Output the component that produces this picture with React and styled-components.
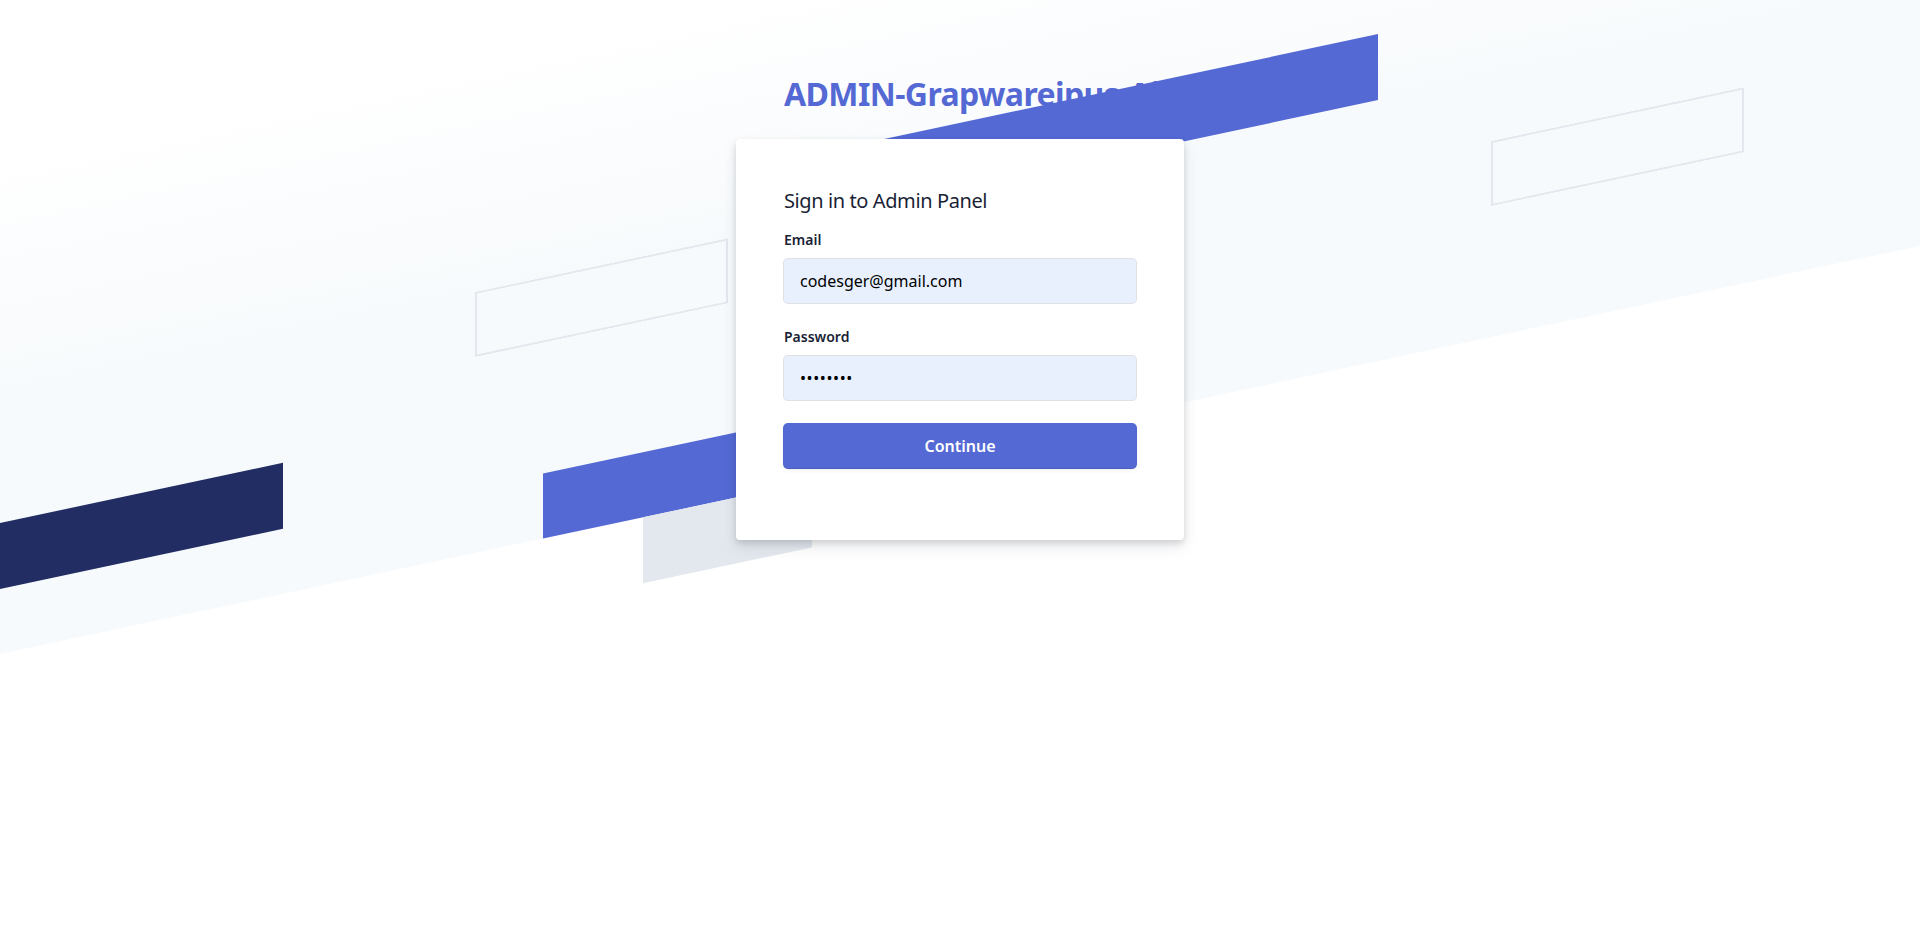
import styled, { createGlobalStyle } from 'styled-components'

const GlobalStyle = createGlobalStyle`
    * {
        box-sizing: border-box;
    }

    html, body {
        margin: 0;
        padding: 0;
        background: #ffffff;
    }

    body {
        font-family: "Noto Sans", "Open Sans", sans-serif;
        color: #1a1f36;
    }
`

const Page = styled.div`
    position: relative;
    min-height: 100vh;
    overflow: hidden;
    display: flex;
    flex-direction: column;
    align-items: center;
    padding-top: 74px;
`

// the backdrop is drawn in a sheared frame (-12deg), rows of 65.4px
const SkewGrid = styled.div`
    position: absolute;
    top: 0;
    left: 0;
    width: 100%;
    z-index: ${props => props.$layer};
    transform: skewY(-12deg);
    transform-origin: 0 0;
    display: grid;
    grid-template-columns: 100%;
    grid-template-rows: 327.3px repeat(6, 65.4px);
    pointer-events: none;
`

const Wash = styled.div`
    grid-row: 1 / 7;
    background-image: linear-gradient(#ffffff 0%, #ffffff 24%, #f7fafc 60%);
`

const Stripe = styled.div`
    grid-row: ${props => props.$row};
    justify-self: start;
    margin-left: ${props => props.$x}px;
    width: ${props => props.$w}px;
    background: ${props => props.$fill || 'transparent'};
    box-shadow: ${props => props.$outline ? 'inset 0 0 0 2px #e3e8ee' : 'none'};
`

const Heading = styled.div`
    position: relative;
    z-index: 1;
    width: 448px;
    padding: 0 48px;
    margin-bottom: 25px;

    & h1 {
        margin: 0;
        font-size: 32px;
        line-height: 40px;
        font-weight: 700;
        color: #5469d4;
        white-space: nowrap;
        letter-spacing: -0.6px;
    }
`

const Card = styled.div`
    position: relative;
    z-index: 3;
    width: 448px;
    padding: 48px;
    background: #ffffff;
    border-radius: 4px;
    box-shadow: rgba(60, 66, 87, 0.12) 0px 7px 14px 0px, rgba(0, 0, 0, 0.12) 0px 3px 6px 0px;
`

const CardTitle = styled.div`
    font-size: 20px;
    line-height: 28px;
    letter-spacing: -0.4px;
    color: #1a1f36;
    margin-bottom: 15px;
`

const Field = styled.div`
    display: flex;
    flex-direction: column;
    margin-bottom: 24px;

    & label {
        font-size: 14px;
        line-height: 20px;
        font-weight: 600;
        color: #1a1f36;
        margin-bottom: 9px;
    }
`

const Input = styled.input`
    height: 44px;
    width: 100%;
    padding: 0 16px;
    border: none;
    border-radius: 4px;
    outline: none;
    font-family: inherit;
    font-size: 16px;
    color: #000000;
    letter-spacing: ${props => props.type === 'password' ? '0.6px' : 'normal'};
    background-color: rgb(232, 240, 254);
    box-shadow: rgba(60, 66, 87, 0.16) 0px 0px 0px 1px;
`

const SubmitButton = styled.button`
    height: 44px;
    width: 100%;
    border: none;
    border-radius: 4px;
    font-family: inherit;
    font-size: 16px;
    font-weight: 600;
    color: #ffffff;
    background-color: rgb(84, 105, 212);
    box-shadow: rgba(0, 0, 0, 0.12) 0px 1px 1px 0px, rgb(84, 105, 212) 0px 0px 0px 1px, rgba(60, 66, 87, 0.08) 0px 2px 5px 0px;
    cursor: pointer;
`

const stripes = [
    { row: 2, x: 760, w: 618, fill: '#5469d4' },
    { row: 3, x: 475, w: 253, outline: true },
    { row: 4, x: 1491, w: 253, outline: true },
    { row: 5, x: -40, w: 323, fill: '#212d63' },
    { row: 6, x: 543, w: 400, fill: '#5469d4' },
    { row: 7, x: 643, w: 169, fill: '#e3e8ee' },
]

export default function App() {
    return (
        <>
            <GlobalStyle />
            <Page>
                <SkewGrid $layer={0}>
                    <Wash />
                </SkewGrid>
                <SkewGrid $layer={2}>
                    {stripes.map((s, i) => (
                        <Stripe key={i} $row={s.row} $x={s.x} $w={s.w} $fill={s.fill} $outline={s.outline} />
                    ))}
                </SkewGrid>

                <Heading>
                    <h1>ADMIN-Grapwareipus-Ai</h1>
                </Heading>

                <Card>
                    <CardTitle>Sign in to Admin Panel</CardTitle>
                    <form onSubmit={e => e.preventDefault()}>
                        <Field>
                            <label htmlFor="email">Email</label>
                            <Input id="email" type="email" defaultValue="codesger@gmail.com" />
                        </Field>
                        <Field>
                            <label htmlFor="password">Password</label>
                            <Input id="password" type="password" defaultValue="password" />
                        </Field>
                        <Field>
                            <SubmitButton type="submit">Continue</SubmitButton>
                        </Field>
                    </form>
                </Card>
            </Page>
        </>
    )
}
